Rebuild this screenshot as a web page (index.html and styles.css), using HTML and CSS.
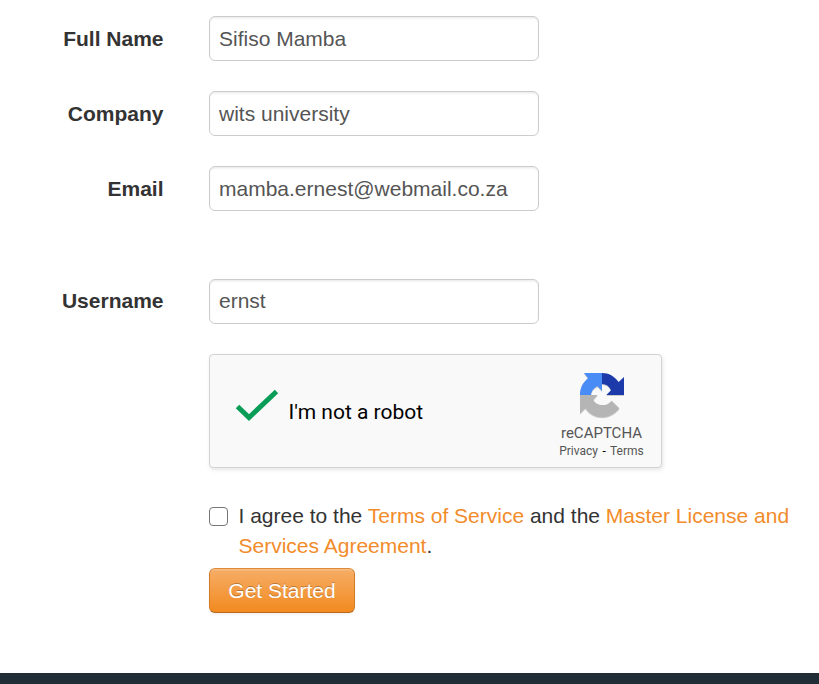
FILE: index.html
```html
<!DOCTYPE html>
<html lang="en">
<head>
<meta charset="utf-8">
<title>Get Started</title>
<link rel="stylesheet" href="styles.css">
</head>
<body>
<form class="signup">
  <div class="row"><label for="name">Full Name</label><input class="field" id="name" type="text" value="Sifiso Mamba"></div>
  <div class="row"><label for="company">Company</label><input class="field" id="company" type="text" value="wits university"></div>
  <div class="row row-email"><label for="email">Email</label><input class="field" id="email" type="text" value="mamba.ernest@webmail.co.za"></div>
  <div class="row row-user"><label for="user">Username</label><input class="field" id="user" type="text" value="ernst"></div>
  <div class="extras">
    <div class="captcha">
      <svg class="check" viewBox="0 0 44 34"><path d="M2.5 17.5 14 28.5 41.5 2.5" fill="none" stroke="#0a9d58" stroke-width="5"/></svg>
      <span class="robot">I'm not a robot</span>
      <div class="brand">
        <svg class="logo" viewBox="102 81 138 141">
          <path fill="#b5b5b5" d="M105 150H158L145 164C153 182 182 188 200 167L223 190C195 227 145 225 121 190L105 206Z"/>
          <path fill="#4a8cf5" d="M117 84H171V138L157 124C145 130 139 139 138 150H105C105 130 112 114 129 100Z"/>
          <path fill="#1c3aa9" d="M171 84C191 84 209 94 221 111L237 96V150H184L198 136C192 123 183 117 171 117Z"/>
        </svg>
        <span class="brand-name">reCAPTCHA</span>
        <span class="legal">Privacy <b>-</b> Terms</span>
      </div>
    </div>
    <div class="agree">
      <input class="box" type="checkbox" id="agree">
      <label for="agree" class="terms">I agree to the <a>Terms of Service</a> and the <a>Master License and Services Agreement</a>.</label>
    </div>
    <button class="start" type="button">Get Started</button>
  </div>
</form>
<footer class="footer"></footer>
</body>
</html>
```
FILE: styles.css
```css
* { box-sizing: border-box; }
body {
  margin: 0;
  height: 684px;
  display: flex;
  flex-direction: column;
  overflow: hidden;
  background: #fff;
  color: #333;
  font: 21px/30px "Liberation Sans", Arial, sans-serif;
}
.signup { flex: 1; padding-top: 16px; }
.row { display: flex; align-items: center; height: 45px; margin-bottom: 30px; }
.row-email { margin-bottom: 68px; }
.row label { width: 163.5px; margin-right: 45.5px; text-align: right; font-weight: bold; }
.field {
  width: 330px;
  height: 45px;
  padding: 0 9px;
  border: 1px solid #ccc;
  border-radius: 6px;
  box-shadow: inset 0 1.5px 1.5px rgba(0, 0, 0, .075);
  color: #555;
  font: inherit;
  background: #fff;
}
.row-user label { padding-bottom: 2px; }
.row-user .field { padding-bottom: 2px; }
.extras { margin-left: 209px; }
.captcha {
  display: flex;
  width: 453px;
  height: 114px;
  padding-left: 25px;
  border: 1px solid #d3d3d3;
  border-radius: 4px;
  background: #f9f9f9;
  box-shadow: 1px 2px 4px rgba(0, 0, 0, .1);
  font-family: Roboto, sans-serif;
}
.check { width: 44px; height: 34px; margin-top: 34px; }
.robot { width: 240px; margin: 42px 0 0 9.5px; color: #000; font-size: 21px; }
.brand { flex: 1; display: flex; flex-direction: column; align-items: center; padding: 17px 0 0 15px; margin-right: 1.5px; color: #555; }
.logo { width: 46px; height: 47px; filter: drop-shadow(0 1px 0.5px rgba(0, 0, 0, .18)); }
.brand-name { margin-top: 4px; font-size: 15px; line-height: 20px; }
.legal { font-size: 12px; line-height: 16px; }
.legal b { margin: 0 1.5px; color: #000; font-weight: normal; }
.agree { display: flex; margin-top: 33px; }
.box { appearance: none; flex: none; width: 19px; height: 19px; margin: 6px 10.5px 0 0; border: 1px solid #767676; border-radius: 4px; }
.terms { width: 562px; }
.terms a { color: #f28c2b; }
.start {
  display: block;
  width: 146px;
  height: 45px;
  margin-top: 7px;
  padding: 0;
  border: 1px solid;
  border-color: #df8b39 #d37b27 #b96718;
  border-radius: 6px;
  background: linear-gradient(#f6ad66, #f28a20);
  box-shadow: inset 0 1.5px 0 rgba(255, 255, 255, .2), 0 1.5px 3px rgba(0, 0, 0, .05);
  color: #fff;
  font: inherit;
  text-shadow: 0 -1.5px 0 rgba(0, 0, 0, .25);
}
.footer { height: 11px; background: #212d36; }
```
